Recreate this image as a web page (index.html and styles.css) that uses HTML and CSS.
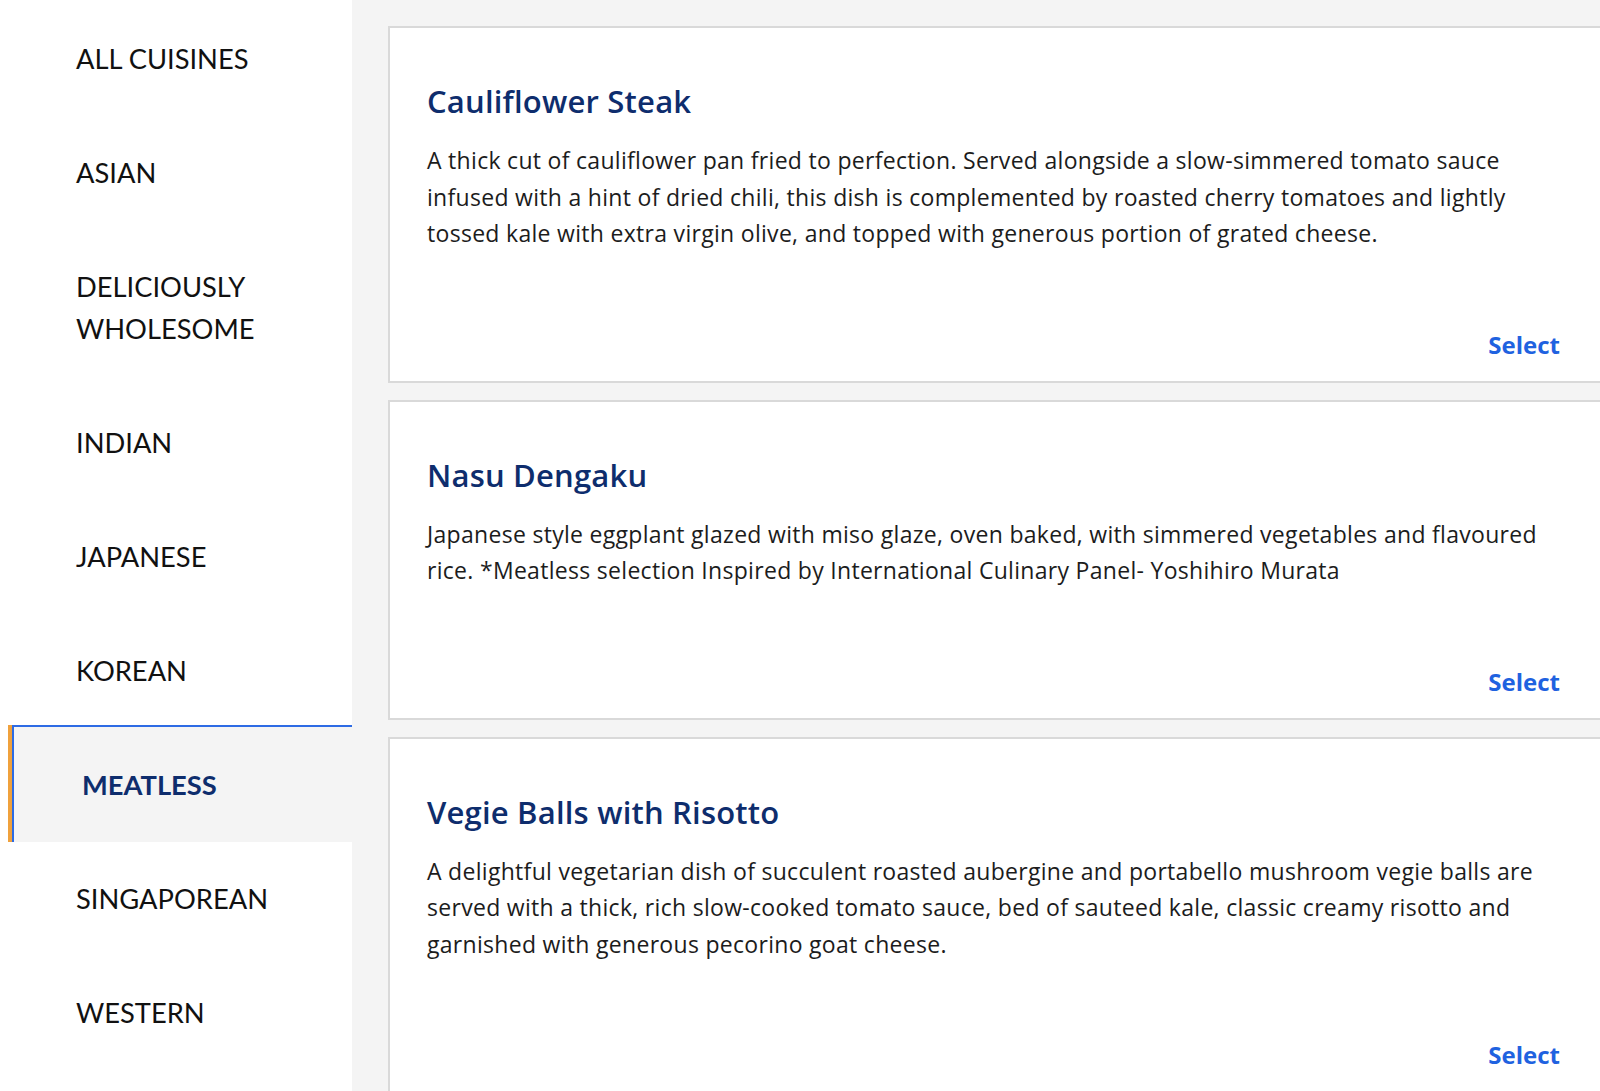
FILE: index.html
```html
<!DOCTYPE html>
<html>
<head>
    <title>Meatless Menu</title>
    <link rel="stylesheet" href="styles.css">
</head>
<body>
    <div class="page">
        <ul class="sidebar">
            <li class="nav-item">ALL CUISINES</li>
            <li class="nav-item">ASIAN</li>
            <li class="nav-item">DELICIOUSLY<br>WHOLESOME</li>
            <li class="nav-item">INDIAN</li>
            <li class="nav-item">JAPANESE</li>
            <li class="nav-item">KOREAN</li>
            <li class="nav-item active">MEATLESS</li>
            <li class="nav-item">SINGAPOREAN</li>
            <li class="nav-item">WESTERN</li>
        </ul>

        <div class="main">
            <div class="card">
                <h3 class="dish-title">Cauliflower Steak</h3>
                <p class="dish-desc">A thick cut of cauliflower pan fried to perfection. Served alongside a slow-simmered tomato sauce infused with a hint of dried chili, this dish is complemented by roasted cherry tomatoes and lightly tossed kale with extra virgin olive, and topped with generous portion of grated cheese.</p>
                <div class="card-foot"><a class="select-link" href="#">Select</a></div>
            </div>
            <div class="card">
                <h3 class="dish-title">Nasu Dengaku</h3>
                <p class="dish-desc">Japanese style eggplant glazed with miso glaze, oven baked, with simmered vegetables and flavoured rice. *Meatless selection Inspired by International Culinary Panel- Yoshihiro Murata</p>
                <div class="card-foot"><a class="select-link" href="#">Select</a></div>
            </div>
            <div class="card">
                <h3 class="dish-title">Vegie Balls with Risotto</h3>
                <p class="dish-desc">A delightful vegetarian dish of succulent roasted aubergine and portabello mushroom vegie balls are served with a thick, rich slow-cooked tomato sauce, bed of sauteed kale, classic creamy risotto and garnished with generous pecorino goat cheese.</p>
                <div class="card-foot"><a class="select-link" href="#">Select</a></div>
            </div>
        </div>
    </div>
</body>
</html>
```

FILE: styles.css
```css
html, body { margin: 0; padding: 0; height: 100%; overflow: hidden; }
body { font-family: "Open Sans", "Liberation Sans", sans-serif; color: #1c1c1c; background: #f4f4f4; }
.page { display: flex; height: 100%; }

.sidebar { list-style: none; margin: 0; padding: 2px 0 0 8px; width: 344px; flex-shrink: 0; background: #fff; font-family: Lato, "Open Sans", sans-serif; }
.nav-item { padding: 36px 0 36px 68px; font-size: 27.3px; line-height: 42px; color: #111; }
.nav-item.active { margin: -3px 0 0 4px; padding: 37px 0 36px 68px; border-top: 2px solid #2d6be4; border-left: 2px solid #2d6be4; box-shadow: -4px 0 0 #f0a13c; background: #f4f4f4; color: #0e2d6d; font-weight: bold; }

.main { flex: 1; padding: 26px 0 0 36px; min-width: 0; }
.card { background: #fff; border: 2px solid #d9d9d9; margin: 0 -4px 17px 0; padding: 55px 39px 21px 37px; }
.dish-title { margin: 0; font-size: 31px; line-height: 36px; font-weight: 600; color: #0e2d6d; letter-spacing: 0.2px; }
.dish-desc { margin: 23px 0 0; font-size: 23px; line-height: 36.5px; letter-spacing: 0.3px; }
.card-foot { margin-top: 78px; text-align: right; font-size: 24px; line-height: 30px; }
.select-link { margin-right: 3px; font-weight: bold; color: #1f62e0; text-decoration: none; }
```
